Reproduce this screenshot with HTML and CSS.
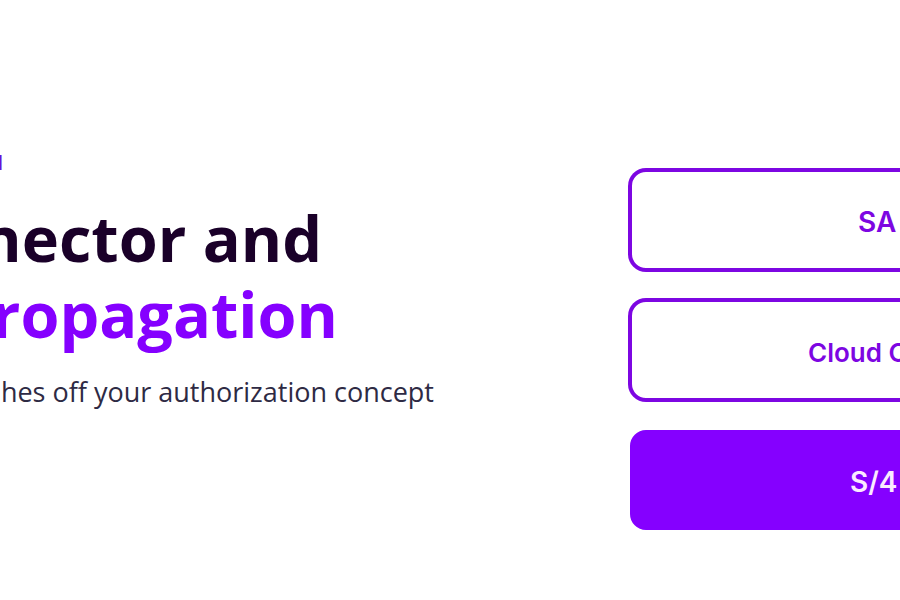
FILE: index.html
```html
<!DOCTYPE html>
<html lang="en">
<head>
<meta charset="utf-8">
<title>Connector and propagation</title>
<link rel="stylesheet" href="styles.css">
</head>
<body>
<main class="slide">
  <section class="intro">
    <p class="eyebrow">N</p>
    <h1 class="title">
      <span class="line line-first">nector and</span>
      <span class="line line-accent">ropagation</span>
    </h1>
    <p class="lead">hes off your authorization concept</p>
  </section>
  <section class="options">
    <button class="option option-sap" type="button">SA</button>
    <button class="option option-cloud" type="button">Cloud C</button>
    <button class="option option-filled" type="button">S/4</button>
  </section>
</main>
</body>
</html>
```

FILE: styles.css
```css
* {
  box-sizing: border-box;
}

body {
  margin: 0;
  background: #fff;
  font-family: "Open Sans", sans-serif;
  overflow-x: hidden;
}

.slide {
  display: grid;
  grid-template-columns: 7fr 3fr;
  overflow: hidden;
}

.intro {
  display: flex;
  flex-direction: column;
  align-items: flex-start;
  padding-top: 151px;
  white-space: nowrap;
}

.eyebrow {
  display: flex;
  justify-content: flex-end;
  width: 3px;
  margin: 0;
  color: #6a0fd8;
  font-family: Inter, sans-serif;
  font-size: 20px;
  font-weight: 600;
  line-height: 24px;
}

.title {
  margin: 25px 0 0;
  color: #1a0029;
  font-size: 63px;
  font-weight: 700;
  line-height: 76px;
}

.line {
  display: flex;
  justify-content: flex-end;
}

.line-first {
  width: 322px;
}

.line-accent {
  width: 338px;
  color: #8500ff;
}

.lead {
  display: flex;
  justify-content: flex-end;
  width: 434px;
  margin: 20px 0 0;
  color: #2e2a44;
  font-size: 27px;
  font-weight: 400;
  line-height: 40px;
}

.options {
  display: flex;
  flex-direction: column;
  gap: 30px;
  margin-right: -24px;
  padding: 170px 0 70px;
}

.option {
  height: 100px;
  padding: 4px 0 0;
  border: 2px solid #7d06e2;
  border-radius: 16px;
  box-shadow: 0 0 0 2px #7d06e2;
  background: #fff;
  color: #7d06e2;
  font: 600 28px Inter, sans-serif;
  text-align: left;
  white-space: nowrap;
}

.option-sap {
  padding-left: 226px;
}

.option-cloud {
  padding-left: 176px;
  font-size: 26px;
}

.option-filled {
  padding-left: 218px;
  border-color: #8500ff;
  box-shadow: none;
  background: #8500ff;
  color: #fbeaff;
}
```
